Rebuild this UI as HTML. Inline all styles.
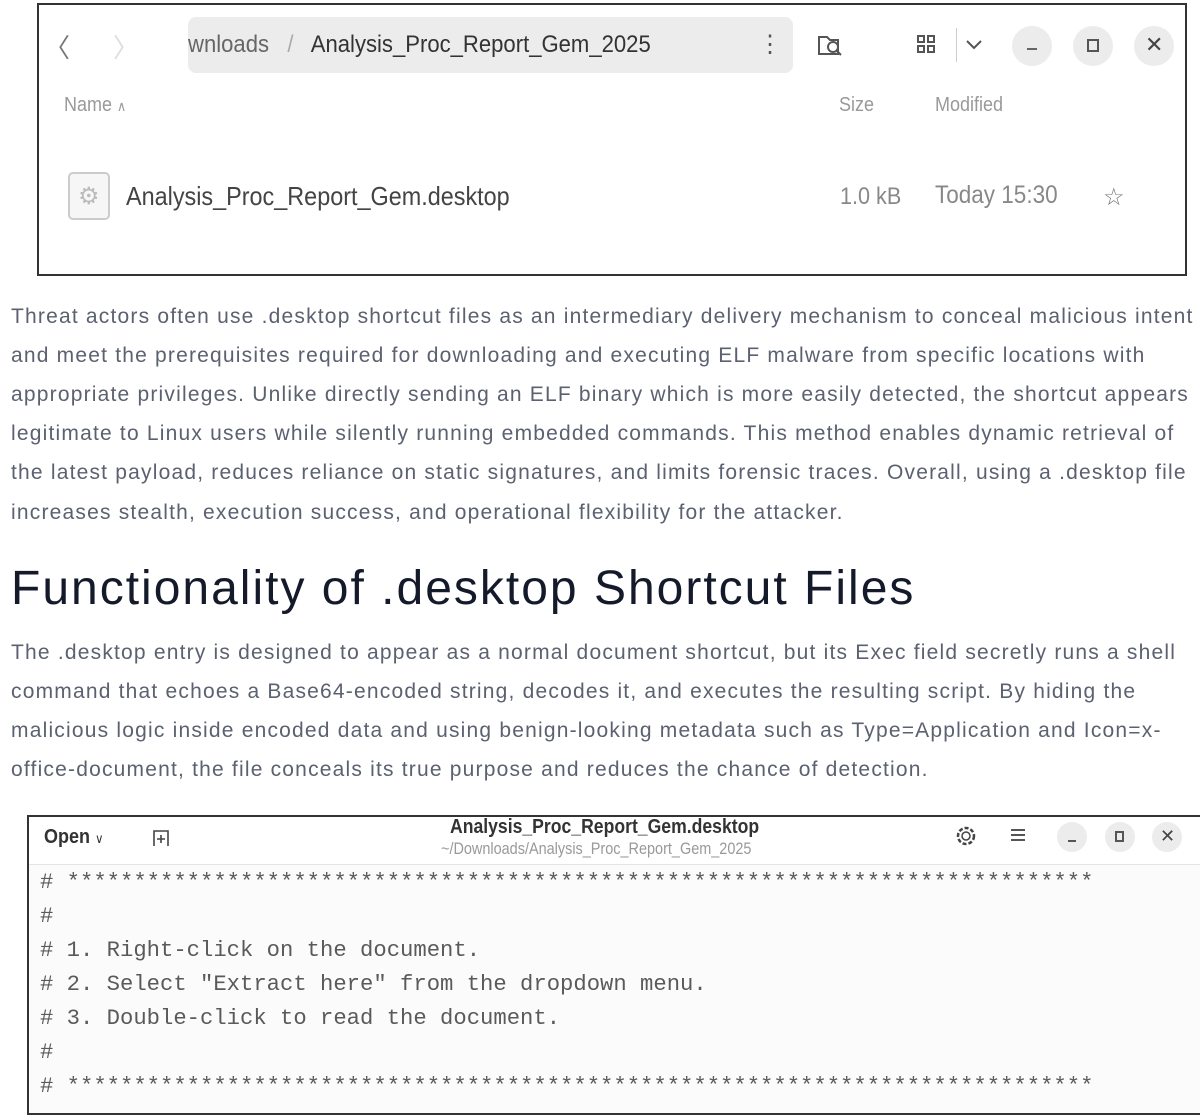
<!DOCTYPE html>
<html><head><meta charset="utf-8"><style>
*{margin:0;padding:0;box-sizing:border-box}
body{width:1200px;height:1107px;overflow:hidden;background:#fff;font-family:"Liberation Sans",sans-serif;position:relative}
.a{position:absolute;white-space:nowrap}
.p{font-size:21px;color:#5b6170;letter-spacing:1.2px;left:11px}
.g{color:#555;font-family:"Liberation Sans",sans-serif}
.m{font-family:"Liberation Mono",monospace;font-size:22px;color:#5a5a5a;left:40px;transform:scaleX(1.01);transform-origin:left}
</style></head><body>
<div class="a" style="left:37px;top:3px;width:1150px;height:273px;border:2px solid #333;"></div>
<div class="a g" style="left:44px;top:28px;font-size:26px;color:#777">&#x2329;</div>
<div class="a g" style="left:113px;top:28px;font-size:26px;color:#ddd">&#x232a;</div>
<div class="a" style="left:188px;top:17px;width:605px;height:56px;background:#ececec;border-radius:8px"></div>
<div class="a g" style="left:188px;top:31px;font-size:24px;color:#666;transform:scaleX(0.92);transform-origin:left">wnloads &nbsp; <span style="color:#aaa">/</span> &nbsp; <span style="color:#333">Analysis_Proc_Report_Gem_2025</span></div>
<div class="a g" style="left:758px;top:30px;font-size:24px;color:#555">&#8942;</div>
<svg class="a" style="left:816px;top:32px" width="30" height="28"><path d="M3 5h8l3 3h8v14H3z" fill="none" stroke="#555" stroke-width="2"/><circle cx="17" cy="15" r="5" fill="#fff" stroke="#555" stroke-width="2"/><path d="M21 19l4 4" stroke="#555" stroke-width="2"/></svg>
<svg class="a" style="left:916px;top:34px" width="22" height="22"><g fill="none" stroke="#555" stroke-width="2"><rect x="2" y="2" width="6" height="6"/><rect x="12" y="2" width="6" height="6"/><rect x="2" y="12" width="6" height="6"/><rect x="12" y="12" width="6" height="6"/></g></svg>
<div class="a" style="left:956px;top:28px;width:1px;height:34px;background:#ccc"></div>
<svg class="a" style="left:964px;top:38px" width="20" height="14"><path d="M3 3l7 7 7-7" fill="none" stroke="#555" stroke-width="2"/></svg>
<div class="a" style="left:1012px;top:26px;width:40px;height:40px;border-radius:50%;background:#ececec"></div>
<div class="a" style="left:1027px;top:48px;width:10px;height:2px;background:#666"></div>
<div class="a" style="left:1073px;top:26px;width:40px;height:40px;border-radius:50%;background:#ececec"></div>
<div class="a" style="left:1087px;top:39px;width:12px;height:13px;border:2px solid #555"></div>
<div class="a" style="left:1134px;top:26px;width:40px;height:40px;border-radius:50%;background:#ececec"></div>
<div class="a g" style="left:1145px;top:32px;font-size:22px;color:#444">&#x2715;</div>
<div class="a g" style="left:64px;top:94px;font-size:20px;color:#999;transform:scaleX(0.9);transform-origin:left">Name <span style="font-size:14px">&#x2227;</span></div>
<div class="a g" style="left:839px;top:94px;font-size:20px;color:#999;transform:scaleX(0.9);transform-origin:left">Size</div>
<div class="a g" style="left:935px;top:94px;font-size:20px;color:#999;transform:scaleX(0.9);transform-origin:left">Modified</div>
<div class="a" style="left:68px;top:172px;width:42px;height:48px;border:2px solid #ccc;border-radius:5px;background:#f6f6f6"></div>
<div class="a g" style="left:78px;top:182px;font-size:24px;color:#bbb">&#9881;</div>
<div class="a g" style="left:126px;top:181px;font-size:26px;color:#444;transform:scaleX(0.9);transform-origin:left">Analysis_Proc_Report_Gem.desktop</div>
<div class="a g" style="left:840px;top:183px;font-size:24px;color:#888;transform:scaleX(0.9);transform-origin:left">1.0 kB</div>
<div class="a g" style="left:935px;top:181px;font-size:25px;color:#888;transform:scaleX(0.9);transform-origin:left">Today 15:30</div>
<div class="a g" style="left:1103px;top:183px;font-size:24px;color:#777">&#9734;</div>

<div class="a p" style="top:305px">Threat actors often use .desktop shortcut files as an intermediary delivery mechanism to conceal malicious intent</div>
<div class="a p" style="top:344px">and meet the prerequisites required for downloading and executing ELF malware from specific locations with</div>
<div class="a p" style="top:383px">appropriate privileges. Unlike directly sending an ELF binary which is more easily detected, the shortcut appears</div>
<div class="a p" style="top:422px">legitimate to Linux users while silently running embedded commands. This method enables dynamic retrieval of</div>
<div class="a p" style="top:461px">the latest payload, reduces reliance on static signatures, and limits forensic traces. Overall, using a .desktop file</div>
<div class="a p" style="top:501px">increases stealth, execution success, and operational flexibility for the attacker.</div>
<div class="a" style="left:11px;top:561px;font-size:48px;color:#151a2b;letter-spacing:2px">Functionality of .desktop Shortcut Files</div>
<div class="a p" style="top:641px">The .desktop entry is designed to appear as a normal document shortcut, but its Exec field secretly runs a shell</div>
<div class="a p" style="top:680px">command that echoes a Base64-encoded string, decodes it, and executes the resulting script. By hiding the</div>
<div class="a p" style="top:719px">malicious logic inside encoded data and using benign-looking metadata such as Type=Application and Icon=x-</div>
<div class="a p" style="top:758px">office-document, the file conceals its true purpose and reduces the chance of detection.</div>

<div class="a" style="left:27px;top:815px;width:1180px;height:300px;border:2px solid #333;background:#fbfbfb"></div>
<div class="a" style="left:29px;top:817px;width:1171px;height:48px;background:#fff;border-bottom:1px solid #e4e4e4"></div>
<div class="a g" style="left:44px;top:826px;font-size:20px;color:#333;font-weight:bold;transform:scaleX(0.9);transform-origin:left">Open <span style="font-size:13px;font-weight:normal">&#x2228;</span></div>
<svg class="a" style="left:152px;top:828px" width="20" height="20"><path d="M2 18V3h14v15M9 7v8M5 11h8" fill="none" stroke="#444" stroke-width="1.6"/></svg>
<div class="a g" style="left:450px;top:816px;font-size:20px;color:#333;font-weight:bold;transform:scaleX(0.88);transform-origin:left">Analysis_Proc_Report_Gem.desktop</div>
<div class="a g" style="left:441px;top:839px;font-size:17px;color:#999;transform:scaleX(0.85);transform-origin:left">~/Downloads/Analysis_Proc_Report_Gem_2025</div>
<svg class="a" style="left:955px;top:825px" width="22" height="22"><circle cx="11" cy="11" r="8" fill="none" stroke="#444" stroke-width="2.5" stroke-dasharray="4 2"/><circle cx="11" cy="11" r="4" fill="none" stroke="#444" stroke-width="1.5"/></svg>
<div class="a" style="left:1011px;top:829px;width:14px;height:12px;border-top:2px solid #555;border-bottom:2px solid #555"></div>
<div class="a" style="left:1011px;top:834px;width:14px;height:2px;background:#555"></div>
<div class="a" style="left:1057px;top:822px;width:30px;height:30px;border-radius:50%;background:#ececec"></div>
<div class="a" style="left:1068px;top:840px;width:8px;height:2px;background:#555"></div>
<div class="a" style="left:1105px;top:822px;width:30px;height:30px;border-radius:50%;background:#ececec"></div>
<div class="a" style="left:1115px;top:831px;width:9px;height:11px;border:2px solid #555"></div>
<div class="a" style="left:1152px;top:822px;width:30px;height:30px;border-radius:50%;background:#ececec"></div>
<div class="a g" style="left:1160px;top:826px;font-size:18px;color:#444">&#x2715;</div>
<div class="a m" style="top:870px"># *****************************************************************************</div>
<div class="a m" style="top:904px">#</div>
<div class="a m" style="top:938px"># 1. Right-click on the document.</div>
<div class="a m" style="top:972px"># 2. Select "Extract here" from the dropdown menu.</div>
<div class="a m" style="top:1006px"># 3. Double-click to read the document.</div>
<div class="a m" style="top:1040px">#</div>
<div class="a m" style="top:1074px"># *****************************************************************************</div>
</body></html>
